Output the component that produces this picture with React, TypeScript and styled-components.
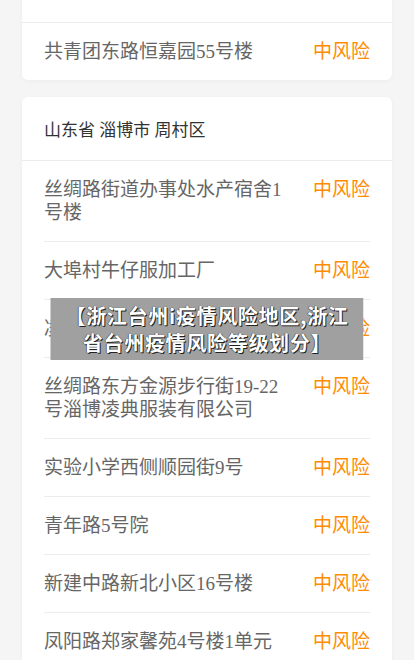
import styled, { createGlobalStyle } from 'styled-components';

const GlobalStyle = createGlobalStyle`
  html, body {
    margin: 0;
    padding: 0;
    background: #f5f5f5;
  }
  body {
    font-family: "Liberation Serif", "Noto Sans CJK SC", serif;
  }
`;

const Page = styled.div`
  display: flex;
  flex-direction: column;
  gap: 17px;
  padding: 0 22px 20px;
  margin-top: -41px;
`;

const Card = styled.div`
  background: #fff;
  border-radius: 6px;
  box-shadow: 0 1px 4px rgba(0, 0, 0, 0.04);
`;

const CardHeader = styled.div`
  height: 63px;
  display: flex;
  align-items: center;
  padding: 0 22px;
  font-size: 17px;
  color: #333;
  border-bottom: 1px solid #ececec;
`;

const List = styled.ul`
  list-style: none;
  margin: 0;
  padding: 0 22px;
`;

const Row = styled.li`
  display: flex;
  align-items: flex-start;
  justify-content: space-between;
  padding: 17px 0;
  font-size: 19px;
  line-height: 23px;
  border-bottom: 1px solid #ececec;

  &:last-child {
    border-bottom: none;
  }
`;

const Place = styled.span`
  flex: 1;
  margin-right: 26px;
  color: #666;
  word-break: break-all;
`;

const Risk = styled.span`
  flex-shrink: 0;
  color: #ff8c00;
`;

const Banner = styled.div`
  position: fixed;
  left: 50%;
  top: 298px;
  transform: translateX(-50%);
  width: 313px;
  box-sizing: border-box;
  padding: 4px 8px;
  background: #a0a0a0;
  color: #fff;
  font-family: "Noto Sans CJK SC", sans-serif;
  font-weight: 700;
  font-size: 20px;
  letter-spacing: 0.7px;
  line-height: 27px;
  text-align: center;
  text-shadow: 1px 1px 0 #222, -0.5px 0 0 #444, 0 0 1px #333;
`;

const areas = [
  {
    title: '',
    places: ['共青团东路恒嘉园55号楼'],
  },
  {
    title: '山东省 淄博市 周村区',
    places: [
      '丝绸路街道办事处水产宿舍1号楼',
      '大埠村牛仔服加工厂',
      '凌云街道王村小区',
      '丝绸路东方金源步行街19-22号淄博凌典服装有限公司',
      '实验小学西侧顺园街9号',
      '青年路5号院',
      '新建中路新北小区16号楼',
      '凤阳路郑家馨苑4号楼1单元',
      '正阳路北首丝绸小区',
    ],
  },
];

export default function App() {
  return (
    <>
      <GlobalStyle />
      <Page>
        {areas.map((area, i) => (
          <Card key={i}>
            <CardHeader>{area.title}</CardHeader>
            <List>
              {area.places.map((p) => (
                <Row key={p}>
                  <Place>{p}</Place>
                  <Risk>中风险</Risk>
                </Row>
              ))}
            </List>
          </Card>
        ))}
      </Page>
      <Banner>【浙江台州i疫情风险地区,浙江省台州疫情风险等级划分】</Banner>
    </>
  );
}
